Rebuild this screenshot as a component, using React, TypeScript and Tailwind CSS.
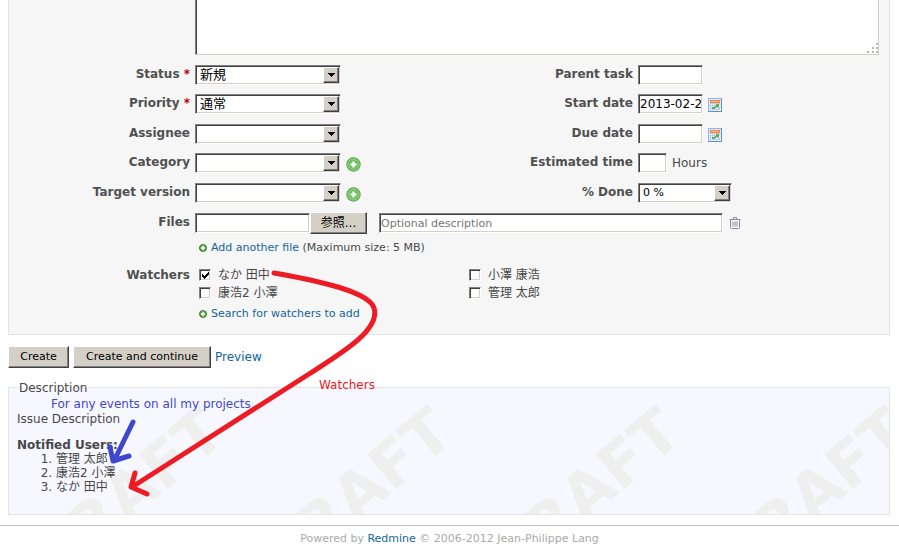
import type { ReactNode } from 'react';

const sunken =
  'rounded-none border border-t-[#808080] border-l-[#808080] border-r-white border-b-white bg-white text-black shadow-[inset_1px_1px_#404040,inset_-1px_-1px_#d4d0c8] outline-none';
const raised =
  'border border-t-white border-l-white border-r-[#404040] border-b-[#404040] bg-[#d4d0c8] text-black shadow-[inset_-1px_-1px_#808080]';

function Row({ id, label, required, children }: { id: string; label: string; required?: boolean; children: ReactNode }) {
  return (
    <div className="flex items-start gap-[5px] odd:mb-[9px] even:mb-[10px]">
      <label htmlFor={id} className="w-[181px] shrink-0 text-right font-bold leading-[18px] text-[#505050]">
        {label}
        {required && <span className="text-[#bb0000]"> *</span>}
      </label>
      <div className="flex h-5 items-center">{children}</div>
    </div>
  );
}

function Select({ id, value, narrow }: { id: string; value?: string; narrow?: boolean }) {
  return (
    <span className={`relative block ${narrow ? 'w-[94px]' : 'w-[146px]'}`}>
      <select id={id} className={`${sunken} block h-5 w-full appearance-none pl-1 leading-4 ${narrow ? 'text-[11px]' : 'text-[13px]'}`}>
        <option>{value ?? ''}</option>
      </select>
      <span className={`${raised} pointer-events-none absolute top-[2px] right-[2px] flex h-4 w-4 items-center justify-center`}>
        <svg width="7" height="4" viewBox="0 0 7 4" shapeRendering="crispEdges">
          <path d="M0 0h7v1H6v1H5v1H4v1H3V3H2V2H1V1H0z" fill="#000" />
        </svg>
      </span>
    </span>
  );
}

function AddIcon({ small }: { small?: boolean }) {
  const size = small ? 8 : 15;
  return (
    <svg width={size} height={size} viewBox="0 0 15 15" className="shrink-0">
      <circle cx="7.5" cy="7.5" r="6.6" fill={small ? '#5a9e45' : '#72c063'} stroke={small ? '#3f7f2c' : '#55a147'} strokeWidth={small ? 1.8 : 1.2} />
      {!small && <circle cx="7.5" cy="7.5" r="5.6" fill="none" stroke="#a3d998" strokeWidth="0.8" />}
      <path d={small ? 'M7.5 3.500v8M3.500 7.500h8' : 'M7.5 4.500v6M4.500 7.500h6'} stroke="#fff" strokeWidth={small ? 3 : 2.2} />
    </svg>
  );
}

function CalendarIcon() {
  return (
    <svg width="14" height="14" viewBox="0 0 14 14" className="mt-[2px] ml-[5px]" shapeRendering="crispEdges">
      <path d="M0 0h14v14H0z" fill="#8fb6e8" />
      <path d="M13 0h1v14H0v-1h13z" fill="#5f8fd0" />
      <path d="M1 1h12v12H1z" fill="#dbe9fa" />
      <path d="M2 2h10v3H2z" fill="#f98440" />
      <path d="M3 3h8v1H3z" fill="#fdb184" />
      <path d="M2 5h10v7H2z" fill="#b9cfee" />
      <path d="M3 6h1v1H3zM5 6h1v1H5zM7 6h1v1H7zM3 8h1v1H3zM5 8h1v1H5zM3 10h1v1H3zM7 10h1v1H7zM9 10h1v1H9zM11 6h1v1h-1zM11 8h1v1h-1z" fill="#fff" />
      <path d="M8 6h3v3H8zM4 9h3v2H4zM7 8h1v2H7z" fill="#5cae55" />
      <path d="M12 10h1v3h-3v-1h2z" fill="#fff" />
    </svg>
  );
}

function Watcher({ name, checked }: { name: string; checked?: boolean }) {
  return (
    <label className="flex h-[18px] items-center gap-[7px]">
      <span className="relative block h-3 w-3">
        <input type="checkbox" defaultChecked={checked} className={`${sunken} peer block h-3 w-3 appearance-none`} />
        <svg width="7" height="7" viewBox="0 0 7 7" className="pointer-events-none absolute top-[3px] left-[3px] hidden peer-checked:block" shapeRendering="crispEdges">
          <path d="M0 2h1v1h1v1h1V3h1V2h1V1h1V0h1v3H6v1H5v1H4v1H3v1H2V6H1V5H0z" fill="#000" />
        </svg>
      </span>
      {name}
    </label>
  );
}

const link = 'text-[#116699]';
const field = `${sunken} h-5 px-px text-[12px]`;

export default function App() {
  return (
    <div className="relative bg-white text-[12px] leading-[14px] text-[#484848] [font-family:'DejaVu_Sans','Noto_Sans_CJK_JP',sans-serif]">
      <form className="pr-[9px] pl-2" onSubmit={(e) => e.preventDefault()}>
        <div className="border border-t-0 border-[#e4e4e4] bg-[#f6f6f6] pb-[13px]">
          <div className="relative mr-[10px] mb-[10px] ml-[186px]">
            <textarea aria-label="Description" className="block h-[55px] w-full resize-none rounded-none border border-t-0 border-l-[#808080] border-r-[#d4d0c8] border-b-[#d4d0c8] bg-white shadow-[inset_1px_0_#404040] outline-none" />
            <svg width="11" height="11" viewBox="0 0 11 11" className="pointer-events-none absolute right-[1px] bottom-[1px]" shapeRendering="crispEdges">
              <path d="M9 0h2v2H9zM5 4h2v2H5zM9 4h2v2H9zM0 8h2v2H0zM5 8h2v2H5zM9 8h2v2H9z" fill="#b8b8b8" />
            </svg>
          </div>

          <div className="grid grid-cols-2">
            <div>
              <Row id="status" label="Status" required><Select id="status" value="新規" /></Row>
              <Row id="priority" label="Priority" required><Select id="priority" value="通常" /></Row>
              <Row id="assignee" label="Assignee"><Select id="assignee" /></Row>
              <Row id="category" label="Category">
                <Select id="category" />
                <button type="button" aria-label="New category" className="mt-[2px] ml-[5px]"><AddIcon /></button>
              </Row>
              <Row id="version" label="Target version">
                <Select id="version" />
                <button type="button" aria-label="New version" className="mt-[2px] ml-[5px]"><AddIcon /></button>
              </Row>
            </div>
            <div className="pl-[3px]">
              <Row id="parent" label="Parent task"><input id="parent" className={`${field} w-[65px]`} /></Row>
              <Row id="start" label="Start date">
                <input id="start" defaultValue="2013-02-24" className={`${field} w-[65px]`} />
                <CalendarIcon />
              </Row>
              <Row id="due" label="Due date">
                <input id="due" className={`${field} w-[65px]`} />
                <CalendarIcon />
              </Row>
              <Row id="hours" label="Estimated time">
                <input id="hours" className={`${field} mr-[5px] w-[29px]`} />
                Hours
              </Row>
              <Row id="done" label="% Done"><Select id="done" value="0 %" narrow /></Row>
            </div>
          </div>

          <div className="mt-[1px] flex items-start gap-[5px]">
            <label htmlFor="file" className="w-[181px] shrink-0 text-right font-bold leading-[18px] text-[#505050]">Files</label>
            <div className="flex h-5 flex-1 items-center pr-[148px]">
              <input id="file" className={`${field} w-[115px] shrink-0`} />
              <button type="button" className={`${raised} h-[22px] w-[57px] shrink-0`}>参照...</button>
              <input aria-label="Optional description" placeholder="Optional description" className={`${sunken} ml-3 h-5 min-w-0 flex-1 px-px text-[11px] placeholder:text-[#757575]`} />
              <button type="button" aria-label="Delete" className="ml-1.5 shrink-0">
                <svg width="12" height="12" viewBox="0 0 12 12" fill="none" stroke="#8c8ca0">
                  <path d="M0.500 2.500h11M4.500 2V0.500h3V2M1.500 3v7.500q0 1 1 1h7q1 0 1-1V3M4 4.500v5M6 4.500v5M8 4.500v5" />
                </svg>
              </button>
            </div>
          </div>
          <p className="mt-2 ml-[190px] flex items-center gap-1 text-[11px]">
            <AddIcon small />
            <span><a href="#add" className={link}>Add another file</a> (Maximum size: 5 MB)</span>
          </p>

          <div className="mt-[11px] flex items-start gap-[9px]">
            <span className="w-[181px] shrink-0 text-right font-bold leading-[18px] text-[#505050]">Watchers</span>
            <div className="grid flex-1 grid-cols-[270px_1fr]">
              <Watcher name="なか 田中" checked />
              <Watcher name="小澤 康浩" />
              <Watcher name="康浩2 小澤" />
              <Watcher name="管理 太郎" />
            </div>
          </div>
          <p className="mt-[5px] ml-[190px] flex items-center gap-1 text-[11px]">
            <AddIcon small />
            <a href="#search" className={link}>Search for watchers to add</a>
          </p>
        </div>

        <div className="mt-[11px] flex items-center gap-1">
          <button type="submit" className={`${raised} h-[22px] w-[61px] text-[11px]`}>Create</button>
          <button type="submit" className={`${raised} h-[22px] w-[138px] text-[11px]`}>Create and continue</button>
          <a href="#preview" className={link}>Preview</a>
        </div>

        <fieldset className="relative mt-[11px] border border-[#e4e4e4] bg-[#f7f7ff] px-2 pb-5">
          <legend className="px-[2px] pt-[2px]">Description</legend>
          <svg className="pointer-events-none absolute inset-0 h-full w-full" aria-hidden="true">
            {[0, 1, 2, 3].map((i) => (
              <text key={i} textAnchor="end" transform={`translate(${219 + i * 228.5} 43) rotate(-40)`} fontSize="62" fontWeight="700" fill="#efefef">
                DRAFT
              </text>
            ))}
          </svg>
          <div className="relative">
            <p className="mt-[17px]">Issue Description</p>
            <p className="mt-3 font-bold">Notified Users:</p>
            <ol className="list-decimal pl-[39px]">
              <li>管理 太郎</li>
              <li>康浩2 小澤</li>
              <li>なか 田中</li>
            </ol>
          </div>
        </fieldset>
      </form>

      <footer className="mt-[10px] border-t border-[#bbb] pt-[6px] text-center text-[11px] text-[#aaa]">
        Powered by <a href="#redmine" className={link}>Redmine</a> © 2006-2012 Jean-Philippe Lang
      </footer>

      <svg width="400" height="510" viewBox="0 0 400 510" fill="none" strokeWidth="5" strokeLinecap="round" strokeLinejoin="round" className="pointer-events-none absolute top-0 left-0">
        <path d="M274 273C320 281 369 292 374 308C381 330 340 354 309 374L132 487M135 473l-4 14l16 7" stroke="#ed1c24" />
        <path d="M133 422L114 461M110 447l3 14l16-5" stroke="#3f48cc" />
      </svg>
      <span className="absolute top-[397px] left-[51px] text-[#3f48cc]">For any events on all my projects</span>
      <span className="absolute top-[378px] left-[319px] text-[#ed1c24]">Watchers</span>
    </div>
  );
}
